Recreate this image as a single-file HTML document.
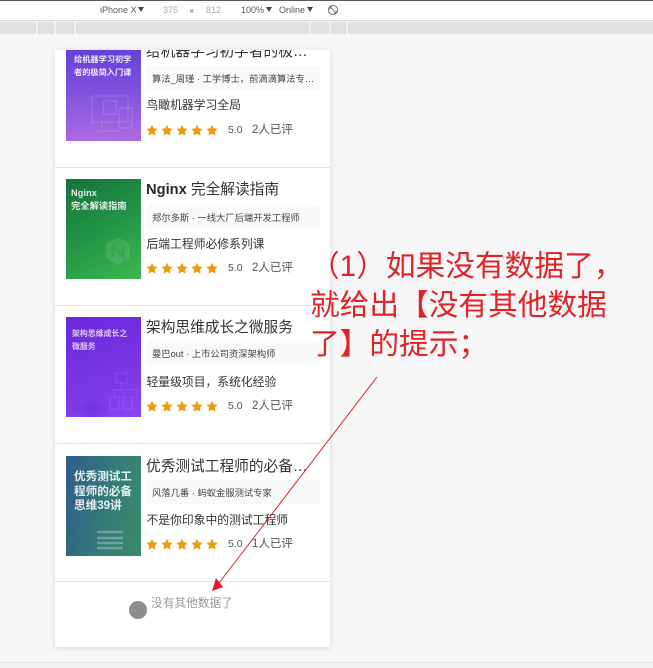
<!DOCTYPE html>
<html lang="zh-CN"><head><meta charset="utf-8"><title>没有其他数据了</title>
<style>
*{box-sizing:border-box}
html,body{margin:0;padding:0;background:#f7f7f8}
body{position:relative;width:653px;height:668px;overflow:hidden;font-family:"Liberation Sans","Noto Sans CJK SC",sans-serif;color:#333;filter:blur(.3px)}
.a{position:absolute;white-space:nowrap}
.tb{font-size:9px;color:#5a5a5a;line-height:12px;top:4px}
.ar{position:absolute;top:7px;width:0;height:0;border-left:3px solid transparent;border-right:3px solid transparent;border-top:5px solid #444}
.seg{position:absolute;top:22px;height:12px;background:#e0e0e0}
#card{position:absolute;left:55px;top:50px;width:275px;height:597px;background:#fff;overflow:hidden}
#shadow{position:absolute;left:55px;top:50px;width:275px;height:597px;box-shadow:0 1px 6px rgba(0,0,0,.12)}
#in{position:absolute;left:-55px;top:-50px;width:653px;height:668px}
.th{position:absolute;left:66px;width:75px;height:100px;overflow:hidden;color:#fff;font-weight:bold}
.th span{position:absolute;white-space:nowrap;opacity:.88}
.t{position:absolute;left:146px;font-size:14.7px;line-height:22px;color:#333;white-space:nowrap}
.tag{position:absolute;left:146px;width:174px;height:24px;background:#f8f9fb;border-radius:3px;font-size:9.3px;line-height:27px;padding-left:6px;color:#444;white-space:nowrap;overflow:hidden}
.d{position:absolute;left:146.5px;font-size:11.8px;line-height:16px;color:#333;white-space:nowrap}
.st{position:absolute;left:146px;width:74px;height:13px}
.sc{position:absolute;left:228px;font-size:10.5px;line-height:14px;color:#555}
.ct{position:absolute;left:252px;font-size:11.5px;line-height:14px;color:#555;white-space:nowrap}
.hr{position:absolute;left:55px;width:275px;height:1px;background:#e4e4e4}
#red{position:absolute;left:310px;top:247px;width:320px;font-size:29.7px;line-height:39px;color:#e12329;white-space:nowrap}
</style></head><body>
<svg width="0" height="0" style="position:absolute"><defs><symbol id="s" viewBox="0 0 74 13"><g fill="#ee9b0f"><polygon id="p" points="6,.8 7.7,4.4 11.6,4.9 8.8,7.6 9.5,11.6 6,9.7 2.5,11.6 3.2,7.6 .4,4.9 4.3,4.4"/><use href="#p" x="15"/><use href="#p" x="30"/><use href="#p" x="45"/><use href="#p" x="60"/></g></symbol></defs></svg>

<div style="position:absolute;left:0;top:0;width:653px;height:1px;background:#5c5c5c"></div>
<div style="position:absolute;left:0;top:1px;width:653px;height:19px;background:#fff"></div>
<div style="position:absolute;left:0;top:20px;width:653px;height:1px;background:#dcdcdc"></div>
<div style="position:absolute;left:0;top:21px;width:653px;height:13px;background:#f0f0f0"></div>
<div class="seg" style="left:0;width:36px"></div>
<div class="seg" style="left:38px;width:16px"></div>
<div class="seg" style="left:56px;width:18px"></div>
<div class="seg" style="left:76px;width:233px"></div>
<div class="seg" style="left:311px;width:18px"></div>
<div class="seg" style="left:331px;width:15px"></div>
<div class="seg" style="left:348px;width:305px"></div>
<div class="a tb" style="left:100px">iPhone X</div><div class="ar" style="left:138px"></div>
<div class="a tb" style="left:163px;color:#aaa">375</div>
<div class="a tb" style="left:189px;top:5px;color:#777">×</div>
<div class="a tb" style="left:206px;color:#aaa">812</div>
<div class="a tb" style="left:241px">100%</div><div class="ar" style="left:266px"></div>
<div class="a tb" style="left:279px">Online</div><div class="ar" style="left:307px"></div>
<svg class="a" style="left:327px;top:4px" width="12" height="12" viewBox="0 0 12 12" fill="none" stroke="#777" stroke-width="1"><circle cx="6" cy="6" r="4.6"/><path d="M2.7 2.7 9.3 9.3M2 5 5 2M7 10 10 7"/></svg>

<div style="position:absolute;left:0;top:662px;width:653px;height:1px;background:#e3e3e3"></div>
<div style="position:absolute;left:0;top:663px;width:653px;height:5px;background:#f1f1f1"></div>

<div id="shadow"></div>
<div id="card"><div id="in">
  <div class="th" style="top:41px;background:linear-gradient(180deg,#5f3fd6 0%,#7a50dc 45%,#ac6ae2 100%)">
    <span style="left:8px;top:12px;font-size:8.2px;line-height:13px">给机器学习初学<br>者的极简入门课</span>
    <svg style="position:absolute;left:0;top:40px" width="75" height="60" fill="none" stroke="#fff" stroke-opacity=".16"><rect x="26" y="15" width="36" height="26"/><rect x="37" y="20" width="13" height="13"/><rect x="53" y="27" width="13" height="20"/><path d="M36 41v8M30 50h24"/></svg>
  </div>
  <div class="t" style="top:41px">给机器学习初学者的极…</div>
  <div class="tag" style="top:66px">算法_周瑾 · 工学博士，前滴滴算法专…</div>
  <div class="d" style="top:97px">鸟瞰机器学习全局</div>
  <svg class="st" style="top:124px"><use href="#s"/></svg><div class="sc" style="top:123px">5.0</div><div class="ct" style="top:123px">2人已评</div>
  <div class="hr" style="top:167px"></div>

  <div class="th" style="top:179px;background:linear-gradient(150deg,#17723c 0%,#239446 50%,#3fb650 100%)">
    <span style="left:5px;top:8px;font-size:9.2px;line-height:12.5px;letter-spacing:.1px">Nginx<br>完全解读指南</span>
    <svg style="position:absolute;left:39px;top:56px" width="26" height="32" viewBox="0 0 30 34"><polygon points="15,1 29,9 29,25 15,33 1,25 1,9" fill="#fff" fill-opacity=".1"/><path d="M9 24V10l12 14V10" fill="none" stroke="#35a650" stroke-width="3"/></svg>
  </div>
  <div class="t" style="top:179px"><span style="font-weight:bold;color:#2a2a2a">Nginx</span> 完全解读指南</div>
  <div class="tag" style="top:205px">郑尔多斯 · 一线大厂后端开发工程师</div>
  <div class="d" style="top:236px">后端工程师必修系列课</div>
  <svg class="st" style="top:262px"><use href="#s"/></svg><div class="sc" style="top:261px">5.0</div><div class="ct" style="top:261px">2人已评</div>
  <div class="hr" style="top:305px"></div>

  <div class="th" style="top:317px;background:linear-gradient(160deg,#6a28db 0%,#7a34e2 55%,#8a45f2 100%)">
    <span style="left:6px;top:10px;font-size:7.9px;line-height:13px;color:#ecdcff">架构思维成长之<br>微服务</span>
    <svg style="position:absolute;left:0;top:50px" width="75" height="50" fill="none" stroke="#fff" stroke-opacity=".1"><rect x="50" y="6" width="11" height="10"/><rect x="44" y="30" width="9" height="12"/><rect x="57" y="30" width="9" height="12"/><path d="M55 16v7M48 30v-7h23v7"/></svg>
    <div style="position:absolute;left:14px;top:84px;width:26px;height:16px;border-radius:50%;background:#5a20c0;opacity:.3;filter:blur(3px)"></div>
  </div>
  <div class="t" style="top:317px">架构思维成长之微服务</div>
  <div class="tag" style="top:341px;height:24px">曼巴out · 上市公司资深架构师</div>
  <div class="d" style="top:374px">轻量级项目，系统化经验</div>
  <svg class="st" style="top:400px"><use href="#s"/></svg><div class="sc" style="top:399px">5.0</div><div class="ct" style="top:399px">2人已评</div>
  <div class="hr" style="top:443px"></div>

  <div class="th" style="top:456px;background:linear-gradient(100deg,#2f5d87 0%,#34797a 50%,#3a8b68 100%)">
    <span style="left:8px;top:14px;font-size:11.6px;line-height:14.5px">优秀测试工<br>程师的必备<br>思维39讲</span>
    <svg style="position:absolute;left:30px;top:73px" width="45" height="24" stroke="#fff" stroke-opacity=".28" stroke-width="2.4"><path d="M1 3h26M1 9h26M1 14h26M1 19h26"/></svg>
  </div>
  <div class="t" style="top:456px">优秀测试工程师的必备…</div>
  <div class="tag" style="top:480px">风落几番 · 蚂蚁金服测试专家</div>
  <div class="d" style="top:512px">不是你印象中的测试工程师</div>
  <svg class="st" style="top:538px"><use href="#s"/></svg><div class="sc" style="top:537px">5.0</div><div class="ct" style="top:537px">1人已评</div>
  <div class="hr" style="top:581px"></div>

  <div style="position:absolute;left:129px;top:601px;width:18px;height:18px;border-radius:50%;background:#8c8c8c"></div>
  <div class="a" style="left:151px;top:596px;font-size:11.7px;line-height:16px;color:#999">没有其他数据了</div>
</div></div>

<div id="red">（1）如果没有数据了，<br>就给出【没有其他数据<br>了】的提示；</div>
<svg class="a" style="left:0;top:0" width="653" height="668"><path d="M377 377 219 583" stroke="#e3222b" stroke-width="1" fill="none"/><polygon points="212,591 216,578 223,587" fill="#e8172b"/></svg>
</body></html>
